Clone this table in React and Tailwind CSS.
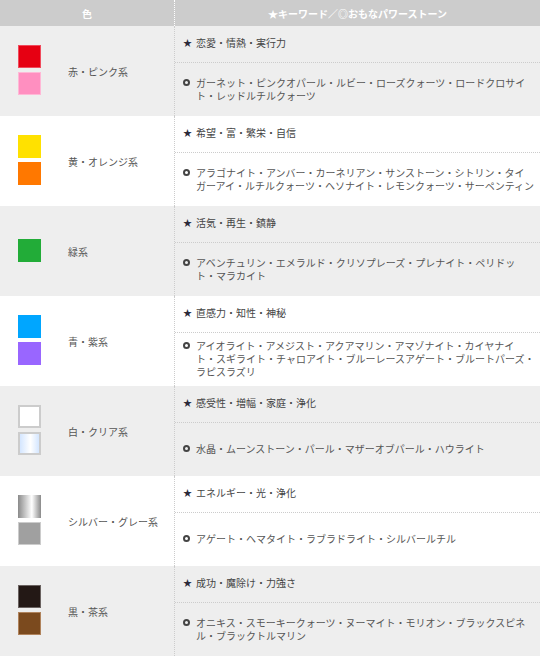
import React from 'react';

const rows = [
  {
    label: '赤・ピンク系',
    swatches: ['bg-[#e60012] border border-[#f04a5c]', 'bg-[#ff8fc0] border border-[#ffb8d6]'],
    keyword: '恋愛・情熱・実行力',
    stones: ['ガーネット・ピンクオパール・ルビー・ローズクォーツ・ロードクロサイ', 'ト・レッドルチルクォーツ'],
    bg: 'bg-[#eeeeee]',
  },
  {
    label: '黄・オレンジ系',
    swatches: ['bg-[#ffe100]', 'bg-[#ff7800]'],
    keyword: '希望・富・繁栄・自信',
    stones: ['アラゴナイト・アンバー・カーネリアン・サンストーン・シトリン・タイ', 'ガーアイ・ルチルクォーツ・ヘソナイト・レモンクォーツ・サーペンティン'],
    bg: 'bg-white',
  },
  {
    label: '緑系',
    swatches: ['bg-[#22ac38]'],
    keyword: '活気・再生・鎮静',
    stones: ['アベンチュリン・エメラルド・クリソプレーズ・プレナイト・ペリドッ', 'ト・マラカイト'],
    bg: 'bg-[#eeeeee]',
  },
  {
    label: '青・紫系',
    swatches: ['bg-[#00a6ff]', 'bg-[#9966ff]'],
    keyword: '直感力・知性・神秘',
    stones: ['アイオライト・アメジスト・アクアマリン・アマゾナイト・カイヤナイ', 'ト・スギライト・チャロアイト・ブルーレースアゲート・ブルートパーズ・', 'ラピスラズリ'],
    bg: 'bg-white',
  },
  {
    label: '白・クリア系',
    swatches: ['bg-white border-2 border-[#cccccc]', 'bg-[linear-gradient(to_right,#d4e6ff,#ffffff_55%,#d4e6ff)] border-2 border-[#cccccc]'],
    keyword: '感受性・増幅・家庭・浄化',
    stones: ['水晶・ムーンストーン・パール・マザーオブパール・ハウライト'],
    bg: 'bg-[#eeeeee]',
  },
  {
    label: 'シルバー・グレー系',
    swatches: ['bg-[linear-gradient(to_right,#8a8a8a,#ffffff_60%,#8a8a8a)]', 'bg-[#a0a0a0] border border-[#cccccc]'],
    keyword: 'エネルギー・光・浄化',
    stones: ['アゲート・ヘマタイト・ラブラドライト・シルバールチル'],
    bg: 'bg-white',
  },
  {
    label: '黒・茶系',
    swatches: ['bg-[#231815] border border-[#6a6260]', 'bg-[#7b4a1e] border border-[#b0835c]'],
    keyword: '成功・魔除け・力強さ',
    stones: ['オニキス・スモーキークォーツ・ヌーマイト・モリオン・ブラックスピネ', 'ル・ブラックトルマリン'],
    bg: 'bg-[#eeeeee]',
  },
];

const font = "font-['Meiryo','Noto_Sans_CJK_JP',sans-serif]";

export default function App() {
  return (
    <div className={`w-[540px] bg-white text-[10px] text-[#555] ${font}`}>
      {/* header */}
      <div className="grid grid-cols-[174px_1fr] h-[26px] bg-[#cccccc] text-white font-bold">
        <div className="flex items-center justify-center">色</div>
        <div className="flex items-center justify-center border-l border-dotted border-white">
          ★キーワード／◎おもなパワーストーン
        </div>
      </div>

      {rows.map((r) => (
        <div key={r.label} className={`grid grid-cols-[174px_1fr] h-[90px] ${r.bg}`}>
          <div className="flex items-center pl-[18px] pb-[2px]">
            <div className="flex flex-col gap-[4px] w-[23px]">
              {r.swatches.map((s, i) => (
                <div key={i} className={`w-[23px] h-[23px] ${s}`} />
              ))}
            </div>
            <span className="ml-[27px] mt-[2px]">{r.label}</span>
          </div>
          <div className="flex flex-col border-l border-dotted border-[#cccccc]">
            <div className="h-[37px] flex items-center pl-[8px] pb-[3px] border-b border-dotted border-[#cccccc] text-[#444]">
              <span className="w-[13px] text-[9px] text-[#2a2a3a]">★</span>
              <span>{r.keyword}</span>
            </div>
            <div className="flex-1 flex items-center pl-[8px] pb-[2px]">
              <div className="flex items-start leading-[13px]">
                <span className="w-[13px] pt-[3px] flex shrink-0">
                  <span className="w-[7px] h-[7px] rounded-full border-2 border-[#444]" />
                </span>
                <div className="whitespace-nowrap">
                  {r.stones.map((l, i) => (
                    <div key={i}>{l}</div>
                  ))}
                </div>
              </div>
            </div>
          </div>
        </div>
      ))}
    </div>
  );
}
